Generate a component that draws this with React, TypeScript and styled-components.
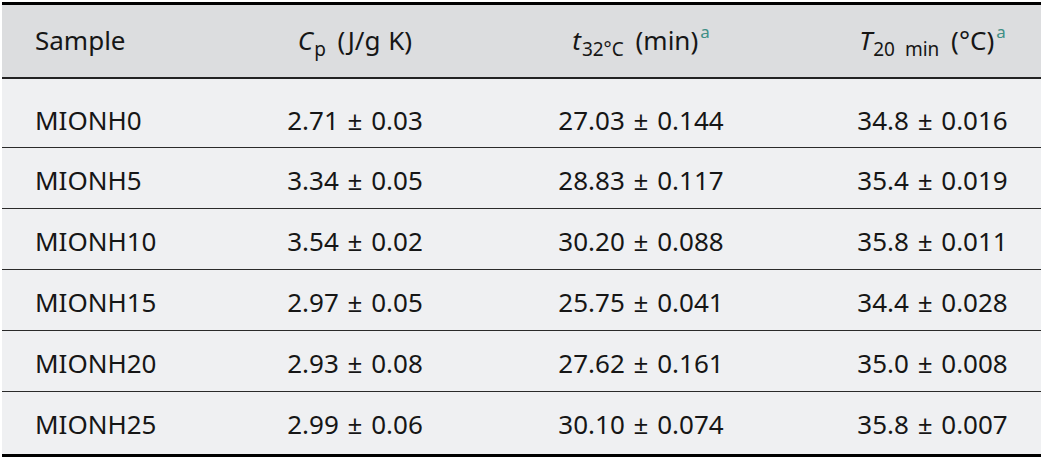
import React, {FC} from 'react';
import styled, {createGlobalStyle} from 'styled-components';

const GlobalStyle = createGlobalStyle`
    html, body {
        margin:0;
        padding:0;
        background-color:#ffffff;
    }
    body {
        font-family:"Noto Sans", "Open Sans", sans-serif;
        color:#161616;
    }
`;

const Page = styled.div`
    box-sizing:border-box;
    width:1044px;
    padding:2px 3px 0px 2px;
`;

const Table = styled.table`
    width:100%;
    border-collapse:collapse;
    table-layout:fixed;
    border-top:3px solid #000000;
    border-bottom:3px solid #000000;
    font-size:26px;
    line-height:34px;
`;

const HeadRow = styled.tr`
    background-color:#dcdddf;
    border-bottom:2px solid #222222;
`;

const Th = styled.th<{ $left?: boolean }>`
    font-weight:400;
    padding:18px 0px 20px ${p => p.$left ? '33px' : '0px'};
    text-align:${p => p.$left ? 'left' : 'center'};
    white-space:nowrap;
    word-spacing:1px;
`;

const Row = styled.tr<{ $first?: boolean }>`
    background-color:#eff0f2;
    border-top:${p => p.$first ? 'none' : '1px solid #2a2a2a'};
`;

const Td = styled.td<{ $left?: boolean; $first?: boolean; $last?: boolean }>`
    padding:${p => p.$first ? '24px' : '15px'} 0px ${p => p.$last ? '13px' : p.$first ? '10px' : '11px'} ${p => p.$left ? '33px' : '0px'};
    text-align:${p => p.$left ? 'left' : 'center'};
    white-space:nowrap;
    word-spacing:2px;
`;

const Italic = styled.i`
    font-style:italic;
`;

const Sub = styled.sub`
    font-size:19px;
    line-height:0;
    vertical-align:-6px;
    margin-left:1px;
    margin-right:4px;
    word-spacing:5px;
`;

const Note = styled.sup`
    font-size:17px;
    line-height:0;
    vertical-align:12px;
    color:#3f8f86;
    margin-left:2px;
`;

interface IRow {
    sample:string;
    cp:string;
    t32:string;
    t20:string;
}

const rows: IRow[] = [
    {sample:'MIONH0', cp:'2.71 ± 0.03', t32:'27.03 ± 0.144', t20:'34.8 ± 0.016'},
    {sample:'MIONH5', cp:'3.34 ± 0.05', t32:'28.83 ± 0.117', t20:'35.4 ± 0.019'},
    {sample:'MIONH10', cp:'3.54 ± 0.02', t32:'30.20 ± 0.088', t20:'35.8 ± 0.011'},
    {sample:'MIONH15', cp:'2.97 ± 0.05', t32:'25.75 ± 0.041', t20:'34.4 ± 0.028'},
    {sample:'MIONH20', cp:'2.93 ± 0.08', t32:'27.62 ± 0.161', t20:'35.0 ± 0.008'},
    {sample:'MIONH25', cp:'2.99 ± 0.06', t32:'30.10 ± 0.074', t20:'35.8 ± 0.007'},
];

export const App: FC = () => {
    return(
        <Page>
            <GlobalStyle/>
            <Table>
                <colgroup>
                    <col style={{width:'250px'}}/>
                    <col style={{width:'206px'}}/>
                    <col style={{width:'366px'}}/>
                    <col style={{width:'217px'}}/>
                </colgroup>
                <thead>
                    <HeadRow>
                        <Th $left>Sample</Th>
                        <Th><Italic>C</Italic><Sub>p</Sub> (J/g K)</Th>
                        <Th><Italic>t</Italic><Sub>32°C</Sub> (min)<Note>a</Note></Th>
                        <Th><Italic>T</Italic><Sub>20 min</Sub> (°C)<Note>a</Note></Th>
                    </HeadRow>
                </thead>
                <tbody>
                    {rows.map((r, i) => {
                        const first = i === 0;
                        const last = i === rows.length - 1;
                        return(
                            <Row key={r.sample} $first={first}>
                                <Td $left $first={first} $last={last}>{r.sample}</Td>
                                <Td $first={first} $last={last}>{r.cp}</Td>
                                <Td $first={first} $last={last}>{r.t32}</Td>
                                <Td $first={first} $last={last}>{r.t20}</Td>
                            </Row>
                        );
                    })}
                </tbody>
            </Table>
        </Page>
    );
};

export default App;
